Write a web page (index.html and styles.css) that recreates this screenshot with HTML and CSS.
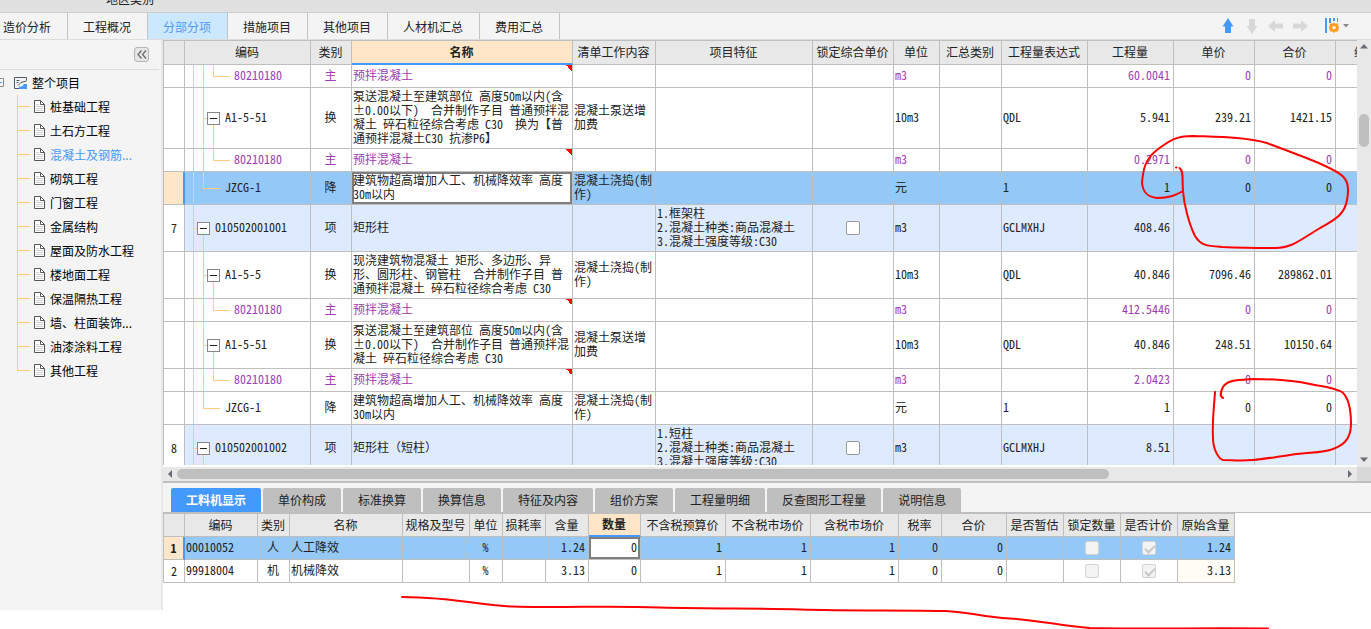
FILE: index.html
```html
<!DOCTYPE html>
<html lang="zh-CN">
<head>
<meta charset="utf-8">
<title>分部分项</title>
<link rel="stylesheet" href="styles.css">
</head>
<body>
<div class="app">
  <header class="topstrip"><span>地区类别</span></header>
  <nav class="navbar">
    <button class="nav-tab nav-first">造价分析</button>
    <button class="nav-tab">工程概况</button>
    <button class="nav-tab nav-active">分部分项</button>
    <button class="nav-tab">措施项目</button>
    <button class="nav-tab">其他项目</button>
    <button class="nav-tab">人材机汇总</button>
    <button class="nav-tab">费用汇总</button>
    <div class="tools">
      <button class="tool" aria-label="上移"><svg width="16" height="16" viewBox="0 0 16 16"><path d="M8 0 13.500 8.500H11V15H5V8.500H2.500Z" fill="#4499fb"/></svg></button>
      <button class="tool" aria-label="下移"><svg width="16" height="16" viewBox="0 0 16 16"><path d="M8 16 13.500 8H11V1H5V8H2.500Z" fill="#d8d8d8"/></svg></button>
      <button class="tool" aria-label="左移"><svg width="16" height="16" viewBox="0 0 16 16"><path d="M0 8 7 2V5.500H15V10.500H7V14Z" fill="#d8d8d8"/></svg></button>
      <button class="tool" aria-label="右移"><svg width="16" height="16" viewBox="0 0 16 16"><path d="M16 8 9 2V5.500H1V10.500H9V14Z" fill="#d8d8d8"/></svg></button>
      <button class="tool tool-set" aria-label="列设置"><svg width="26" height="16" viewBox="0 0 26 16"><path d="M1 0h2v15H1zM5 0h2v5H5zM9 0h2v3H9zM13 0h1v4h-1z" fill="#4499fb"/><path d="M10 4.500l1.500 1.300 2.200-.5.700 2.200L15 9.500l-.6 2-.7 2.200-2.200-.3L10 15l-1.500-1.600-2.200.3-.7-2.200L5 9.500l.6-2 .7-2.200 2.200.5Z" fill="#fb9d1e"/><circle cx="10" cy="9.600" r="1.700" fill="#fff"/><path d="M19 6h6l-3 3.500Z" fill="#8a8a8a"/></svg></button>
    </div>
  </nav>
  <div class="body">
    <aside class="sidebar">
      <div class="side-head"><button class="collapse" aria-label="收起"><svg width="10" height="9" viewBox="0 0 10 9"><path d="M4.500.5 1 4.500l3.500 4M9 .5 5.500 4.500 9 8.500" fill="none" stroke="#666" stroke-width="1.200"/></svg></button></div>
      <div class="root"><svg width="28" height="14" viewBox="0 0 28 14"><path d="M0 2.500H3.500V10.500H0" fill="none" stroke="#8c8c8c"/><path d="M0 6.500H2" stroke="#4499fb"/><path d="M26.500 4.500V1.500H14.500V12.500H19" fill="none" stroke="#505a66"/><path d="M16.500 4.500H19.500M16.500 6.500H18.500M18 9.500 21 6.500 26.500 5" fill="none" stroke="#505a66"/><path d="M19 13V10.500H22L24 8H27V13Z" fill="#4499fb"/></svg><span>整个项目</span></div>
      <ul class="tree">
        <li><svg class="doc"><use href="#doc"/></svg>桩基础工程</li>
        <li><svg class="doc"><use href="#doc"/></svg>土石方工程</li>
        <li class="on"><svg class="doc"><use href="#doc"/></svg>混凝土及钢筋...</li>
        <li><svg class="doc"><use href="#doc"/></svg>砌筑工程</li>
        <li><svg class="doc"><use href="#doc"/></svg>门窗工程</li>
        <li><svg class="doc"><use href="#doc"/></svg>金属结构</li>
        <li><svg class="doc"><use href="#doc"/></svg>屋面及防水工程</li>
        <li><svg class="doc"><use href="#doc"/></svg>楼地面工程</li>
        <li><svg class="doc"><use href="#doc"/></svg>保温隔热工程</li>
        <li><svg class="doc"><use href="#doc"/></svg>墙、柱面装饰...</li>
        <li><svg class="doc"><use href="#doc"/></svg>油漆涂料工程</li>
        <li><svg class="doc"><use href="#doc"/></svg>其他工程</li>
      </ul>
    </aside>
    <main class="work">
      <section class="upper">
        <div class="grid-wrap">
          <table class="grid main-grid">
            <colgroup><col class="w21"><col class="w126"><col class="w41"><col class="w221"><col class="w83"><col class="w157"><col class="w81"><col class="w46"><col class="w62"><col class="w86"><col class="w86"><col class="w81"><col class="w81"><col></colgroup>
            <thead><tr><th></th><th>编码</th><th>类别</th><th class="cur-col">名称</th><th>清单工作内容</th><th>项目特征</th><th>锁定综合单价</th><th>单位</th><th>汇总类别</th><th>工程量表达式</th><th>工程量</th><th>单价</th><th>合价</th><th class="cut">综</th></tr></thead>
            <tbody>
              <tr class="mat"><td></td><td class="code lv3">80210180</td><td class="c">主</td><td class="flag">预拌混凝土</td><td></td><td></td><td></td><td>m3</td><td></td><td></td><td class="r">60.0041</td><td class="r">0</td><td class="r">0</td><td></td></tr>
              <tr class="h4"><td></td><td class="code lv2"><button class="box" aria-label="折叠"></button>A1-5-51</td><td class="c">换</td><td>泵送混凝土至建筑部位 高度50m以内(含<br>±0.00以下)  合并制作子目 普通预拌混<br>凝土 碎石粒径综合考虑 C30  换为【普<br>通预拌混凝土C30 抗渗P6】</td><td>混凝土泵送增<br>加费</td><td></td><td></td><td>10m3</td><td></td><td>QDL</td><td class="r">5.941</td><td class="r">239.21</td><td class="r">1421.15</td><td></td></tr>
              <tr class="mat"><td></td><td class="code lv3">80210180</td><td class="c">主</td><td class="flag">预拌混凝土</td><td></td><td></td><td></td><td>m3</td><td></td><td></td><td class="r">0.2971</td><td class="r">0</td><td class="r">0</td><td></td></tr>
              <tr class="h2 sel"><td class="num"></td><td class="code leaf">JZCG-1</td><td class="c">降</td><td class="focus">建筑物超高增加人工、机械降效率 高度<br>30m以内</td><td>混凝土浇捣(制<br>作)</td><td></td><td></td><td>元</td><td></td><td>1</td><td class="r">1</td><td class="r">0</td><td class="r">0</td><td></td></tr>
              <tr class="h3 item"><td class="num">7</td><td class="code lv1"><button class="box" aria-label="折叠"></button>010502001001</td><td class="c">项</td><td>矩形柱</td><td></td><td>1.框架柱<br>2.混凝土种类:商品混凝土<br>3.混凝土强度等级:C30</td><td class="c"><input type="checkbox" aria-label="锁定综合单价"></td><td>m3</td><td></td><td>GCLMXHJ</td><td class="r">408.46</td><td></td><td></td><td></td></tr>
              <tr class="h3"><td></td><td class="code lv2"><button class="box" aria-label="折叠"></button>A1-5-5</td><td class="c">换</td><td>现浇建筑物混凝土 矩形、多边形、异<br>形、圆形柱、钢管柱  合并制作子目 普<br>通预拌混凝土 碎石粒径综合考虑 C30</td><td>混凝土浇捣(制<br>作)</td><td></td><td></td><td>10m3</td><td></td><td>QDL</td><td class="r">40.846</td><td class="r">7096.46</td><td class="r">289862.01</td><td></td></tr>
              <tr class="mat"><td></td><td class="code lv3">80210180</td><td class="c">主</td><td class="flag">预拌混凝土</td><td></td><td></td><td></td><td>m3</td><td></td><td></td><td class="r">412.5446</td><td class="r">0</td><td class="r">0</td><td></td></tr>
              <tr class="h3"><td></td><td class="code lv2"><button class="box" aria-label="折叠"></button>A1-5-51</td><td class="c">换</td><td>泵送混凝土至建筑部位 高度50m以内(含<br>±0.00以下)  合并制作子目 普通预拌混<br>凝土 碎石粒径综合考虑 C30</td><td>混凝土泵送增<br>加费</td><td></td><td></td><td>10m3</td><td></td><td>QDL</td><td class="r">40.846</td><td class="r">248.51</td><td class="r">10150.64</td><td></td></tr>
              <tr class="mat"><td></td><td class="code lv3">80210180</td><td class="c">主</td><td class="flag">预拌混凝土</td><td></td><td></td><td></td><td>m3</td><td></td><td></td><td class="r">2.0423</td><td class="r">0</td><td class="r">0</td><td></td></tr>
              <tr class="h2"><td></td><td class="code leaf">JZCG-1</td><td class="c">降</td><td>建筑物超高增加人工、机械降效率 高度<br>30m以内</td><td>混凝土浇捣(制<br>作)</td><td></td><td></td><td>元</td><td></td><td>1</td><td class="r">1</td><td class="r">0</td><td class="r">0</td><td></td></tr>
              <tr class="h3 item"><td class="num">8</td><td class="code lv1"><button class="box" aria-label="折叠"></button>010502001002</td><td class="c">项</td><td>矩形柱（短柱）</td><td></td><td>1.短柱<br>2.混凝土种类:商品混凝土<br>3.混凝土强度等级:C30</td><td class="c"><input type="checkbox" aria-label="锁定综合单价"></td><td>m3</td><td></td><td>GCLMXHJ</td><td class="r">8.51</td><td></td><td></td><td></td></tr>
            </tbody>
          </table>
        </div>
        <div class="vbar"><svg width="10" height="6" viewBox="0 0 10 6"><path d="M5 0 9 4.500H1Z" fill="#6c6c76"/></svg><div class="vtrack"><i class="vthumb"></i></div><svg width="10" height="6" viewBox="0 0 10 6"><path d="M5 5 9 .5H1Z" fill="#6c6c76"/></svg></div>
        <div class="hbar"><svg width="6" height="10" viewBox="0 0 6 10"><path d="M1 5 5 1V9Z" fill="#6c6c76"/></svg><div class="htrack"><i class="hthumb"></i></div><svg width="6" height="10" viewBox="0 0 6 10"><path d="M5 5 1 1V9Z" fill="#6c6c76"/></svg></div>
        <div class="corner"></div>
      </section>
      <section class="lower">
        <nav class="subtabs">
          <button class="subtab sub-on">工料机显示</button><button class="subtab">单价构成</button><button class="subtab">标准换算</button><button class="subtab">换算信息</button><button class="subtab">特征及内容</button><button class="subtab">组价方案</button><button class="subtab">工程量明细</button><button class="subtab">反查图形工程量</button><button class="subtab">说明信息</button>
        </nav>
        <table class="grid sub-grid">
          <colgroup><col class="w21"><col class="w73"><col class="w32"><col class="w113"><col class="w67"><col class="w33"><col class="w43"><col class="w43"><col class="w52"><col class="w85"><col class="w85"><col class="w88"><col class="w43"><col class="w65"><col class="w57"><col class="w57"><col class="w57"><col class="w57"></colgroup>
          <thead><tr><th></th><th>编码</th><th>类别</th><th>名称</th><th>规格及型号</th><th>单位</th><th>损耗率</th><th>含量</th><th class="cur-col">数量</th><th>不含税预算价</th><th>不含税市场价</th><th>含税市场价</th><th>税率</th><th>合价</th><th>是否暂估</th><th>锁定数量</th><th>是否计价</th><th>原始含量</th></tr></thead>
          <tbody>
            <tr class="sel"><td class="num">1</td><td>00010052</td><td class="c">人</td><td>人工降效</td><td></td><td class="c">%</td><td></td><td class="r">1.24</td><td class="r focus">0</td><td class="r">1</td><td class="r">1</td><td class="r">1</td><td class="r">0</td><td class="r">0</td><td></td><td class="c"><input type="checkbox" disabled aria-label="锁定数量"></td><td class="c"><input type="checkbox" disabled checked aria-label="是否计价"></td><td class="r">1.24</td></tr>
            <tr><td class="num">2</td><td>99918004</td><td class="c">机</td><td>机械降效</td><td></td><td class="c">%</td><td></td><td class="r">3.13</td><td class="r">0</td><td class="r">1</td><td class="r">1</td><td class="r">1</td><td class="r">0</td><td class="r">0</td><td></td><td class="c"><input type="checkbox" disabled aria-label="锁定数量"></td><td class="c"><input type="checkbox" disabled checked aria-label="是否计价"></td><td class="r orig">3.13</td></tr>
          </tbody>
        </table>
      </section>
    </main>
  </div>
</div>
<svg class="defs" width="0" height="0"><symbol id="doc" viewBox="0 0 11 14"><path d="M.5.500H6.500L10.500 4.500V12.500H.5Z" fill="#fff" stroke="#555"/><path d="M6.500.500V4.500H10.500" fill="none" stroke="#555"/><path d="M2 6.500H9M2 8.500H9M2 10.500H9M2 4.500H5" stroke="#ccc"/></symbol></svg>
<svg class="ink" width="1371" height="629" viewBox="0 0 1371 629">
  <path d="M1176 167.500h.5M1179.500 168C1184 171 1182 181 1183 191C1184 205 1189 224 1195 236C1201 246 1208 246 1222 247C1245 248 1265 248 1275 248C1292 248 1300 240 1320 228C1337 219 1345 213 1347 200C1350 184 1347 177 1335 171C1318 161 1300 156 1267 143C1245 137 1220 137 1193 136C1175 136 1169 141 1157 150C1145 159 1143 170 1142 183C1143 193 1148 197 1157 198C1170 198 1176 195 1183 191"/>
  <path d="M1223 398C1219 396 1221 391 1223 387C1227 380 1238 380 1253 379C1275 379 1292 380 1310 384C1325 387 1333 387 1342 392C1349 398 1351 410 1351 424C1351 441 1341 446 1333 449C1322 453 1312 452 1290 455C1275 457 1265 459 1253 460C1240 461 1232 460 1223 460C1219 459 1213 450 1213 438C1212 422 1214 408 1215 392"/>
  <path d="M402 597C430 597 455 600 480 603.500C505 607 520 607 550 607C590 607 620 606 660 607.500C720 609 760 608 800 609.500C850 611 900 610 945 611C972 612 980 617 1010 618.500C1040 620 1060 626 1090 628C1130 629 1200 628 1268 628.500"/>
</svg>
</body>
</html>
```
FILE: styles.css
```css
* { box-sizing: border-box; }
body {
  margin: 0;
  background: #fff;
  color: #222;
  font: 12px/14px "Noto Sans CJK SC", sans-serif;
  overflow: hidden;
}
button {
  margin: 0;
  padding: 0;
  border: 0;
  background: none;
  color: inherit;
  font: inherit;
}
svg { display: block; flex: none; }
.defs { position: absolute; }
.ink { position: absolute; left: 0; top: 0; pointer-events: none; }
.ink path { fill: none; stroke: #f00; stroke-width: 2; stroke-linecap: round; }

.app { display: flex; flex-direction: column; height: 100vh; }
.topstrip {
  display: flex;
  align-items: flex-end;
  flex: none;
  height: 13px;
  padding: 0 0 6px 106px;
  background: #e1e1e1;
  border-bottom: 1px solid #ccc;
}
.navbar {
  display: flex;
  flex: none;
  height: 27px;
  background: #f4f4f4;
  border-bottom: 1px solid #ddd;
}
.nav-tab { padding: 2px 16px 0 15px; border-right: 1px solid #c4c4c4; }
.nav-first { padding-left: 3px; }
.nav-active { background: #cce8ff; color: #4c9cfa; }
.tools { display: flex; align-items: center; gap: 8px; margin-left: auto; padding-right: 21px; }
.tool-set { margin-left: 8px; }

.body { display: flex; flex: 1; min-height: 0; }
.sidebar {
  flex: none;
  width: 163px;
  margin-bottom: 19px;
  background: #f4f4f4;
  border-right: 2px solid #e8e8e8;
  color: #000;
}
.side-head {
  display: flex;
  justify-content: flex-end;
  height: 30px;
  margin-right: 2px;
  padding: 7px 10px 0 0;
  border-bottom: 1px solid #ddd;
}
.collapse {
  display: flex;
  align-items: center;
  justify-content: center;
  width: 15px;
  height: 15px;
  background: #e6e6e6;
  border: 1px solid #b4b4b4;
  border-radius: 3px;
}
.root { display: flex; align-items: center; gap: 4px; height: 25px; }
.tree {
  margin: 0 0 0 17px;
  padding: 0;
  list-style: none;
  background: linear-gradient(#ffcb80, #ffcb80) 0 0 / 1px 275px no-repeat;
}
.tree li {
  display: flex;
  align-items: center;
  gap: 5px;
  height: 24px;
  padding-left: 17px;
  background: linear-gradient(#ffcb80, #ffcb80) 0 11px / 13px 1px no-repeat;
}
.tree .on { color: #4499fb; }
.doc { width: 11px; height: 14px; }

.work { display: flex; flex-direction: column; flex: 1; min-width: 0; }
.upper {
  display: grid;
  grid-template: minmax(0, 1fr) 14px / minmax(0, 1fr) 14px;
  flex: 1;
  min-height: 0;
  border-bottom: 2px solid #bfbfbf;
}
.grid-wrap {
  overflow: hidden;
  margin-bottom: 2px;
  border-top: 1px solid #bfbfbf;
}
.grid {
  border-collapse: separate;
  border-spacing: 0;
  table-layout: fixed;
  border-left: 1px solid #bfbfbf;
  font-family: "Noto Sans Mono CJK SC", "Noto Sans CJK SC", monospace;
}
.main-grid { width: 100%; }
.sub-grid { width: 1072px; border-top: 1px solid #bfbfbf; }
.grid th, .grid td {
  overflow: hidden;
  height: 23px;
  padding: 0 3px 2px 1px;
  border: 0 solid #bfbfbf;
  border-width: 0 1px 1px 0;
  text-align: left;
  white-space: pre;
}
.grid th {
  padding: 0 1px 1px 0;
  background: #e8e8e8;
  font-weight: 400;
  text-align: center;
}
.main-grid th { height: 24px; }
.grid th.cur-col {
  background: #ffe6c8;
  border-bottom: 2px solid #4499ff;
  font-weight: 700;
}
.grid th.cut { padding-left: 18px; text-align: left; }
.main-grid th:last-child, .main-grid td:last-child { border-right: 0; }
.w21 { width: 21px; } .w32 { width: 32px; } .w33 { width: 33px; }
.w41 { width: 41px; } .w43 { width: 43px; } .w46 { width: 46px; }
.w52 { width: 52px; } .w57 { width: 57px; } .w62 { width: 62px; }
.w65 { width: 65px; } .w67 { width: 67px; } .w73 { width: 73px; }
.w81 { width: 81px; } .w83 { width: 83px; } .w85 { width: 85px; }
.w86 { width: 86px; } .w88 { width: 88px; } .w113 { width: 113px; }
.w126 { width: 126px; } .w157 { width: 157px; } .w221 { width: 221px; }
.grid .h2 td { height: 33px; }
.grid .h3 td { height: 47px; }
.grid .h4 td { height: 61px; }
.grid .c { padding: 0 1px 2px 0; text-align: center; }
.grid .num { padding: 0; text-align: center; }
.grid .r { text-align: right; }
.mat { color: #a03cb4; }
.item td { background-color: #deebff; }
.item td.num { background-color: #fff; }
.sel td { background-color: #93c8f7; }
.grid .sel td.num {
  background-color: #ffe6c8;
  border-right: 2px solid #4499ff;
  font-weight: 700;
}
.sel td.focus { background-color: #fff; box-shadow: inset 0 0 0 2px #7f7f7f; }
.orig { background: #fffbf5; }
.flag {
  background: linear-gradient(45deg, transparent 50%, #f00 50%) right top / 6px 6px no-repeat;
}
.code { --l: linear-gradient(#ffcb80, #ffcb80); background-repeat: no-repeat; }
.grid .lv1 {
  padding-left: 12px;
  background-image: var(--l), var(--l), var(--l);
  background-position: 8px 0, 8px 50%, 18px 100%;
  background-size: 1px 100%, 6px 1px, 1px 50%;
}
.grid .lv2 {
  padding-left: 22px;
  background-image: var(--l), var(--l), var(--l), var(--l);
  background-position: 8px 0, 18px 0, 18px 50%, 28px 100%;
  background-size: 1px 100%, 1px 100%, 6px 1px, 1px 50%;
}
.grid .lv3 {
  padding-left: 49px;
  background-image: var(--l), var(--l), var(--l), var(--l);
  background-position: 8px 0, 18px 0, 28px 0, 28px 50%;
  background-size: 1px 100%, 1px 100%, 1px 50%, 17px 1px;
}
.grid .leaf {
  padding-left: 40px;
  background-image: var(--l), var(--l), var(--l);
  background-position: 8px 0, 18px 0, 18px 50%;
  background-size: 1px 100%, 1px 50%, 17px 1px;
}
.box {
  width: 13px;
  height: 13px;
  margin-right: 5px;
  border: 1px solid #888;
  background: linear-gradient(#222, #222) 50% 50% / 7px 1px no-repeat #fff;
  vertical-align: -2px;
}
input[type="checkbox"] {
  appearance: none;
  display: block;
  width: 14px;
  height: 14px;
  margin: 1px auto 0;
  border: 1px solid #999;
  border-radius: 2px;
  background: #fff;
}
input[type="checkbox"]:disabled { border-color: #d4d4d4; background: #f3f3f3; }
input[type="checkbox"]:checked::after {
  content: "";
  display: block;
  width: 8px;
  height: 4px;
  margin: 3px 0 0 2px;
  border: solid #c8c8c8;
  border-width: 0 0 2px 2px;
  transform: rotate(-45deg);
}

.vbar {
  display: flex;
  flex-direction: column;
  align-items: center;
  padding: 4px 0;
  background: #e8e8e8;
}
.vtrack { flex: 1; padding-top: 64px; }
.vthumb { display: block; width: 10px; height: 33px; border-radius: 5px; background: #bfbfbf; }
.hbar { display: flex; align-items: center; padding: 0 4px; background: #e8e8e8; }
.htrack { flex: 1; padding: 0 5px 0 4px; }
.hthumb { display: block; width: 80%; height: 10px; border-radius: 5px; background: #bfbfbf; }
.corner { background: #d8d8d8; }

.lower { flex: none; height: 146px; }
.subtabs {
  display: flex;
  gap: 2px;
  height: 30px;
  padding: 5px 0 0 8px;
  background: #f4f4f4;
  border-bottom: 1px solid #bfbfbf;
}
.subtab { padding: 0 15px; background: #bfbfbf; border-radius: 2px 2px 0 0; }
.sub-on { background: #4499ff; color: #fff; font-weight: 700; }
```
